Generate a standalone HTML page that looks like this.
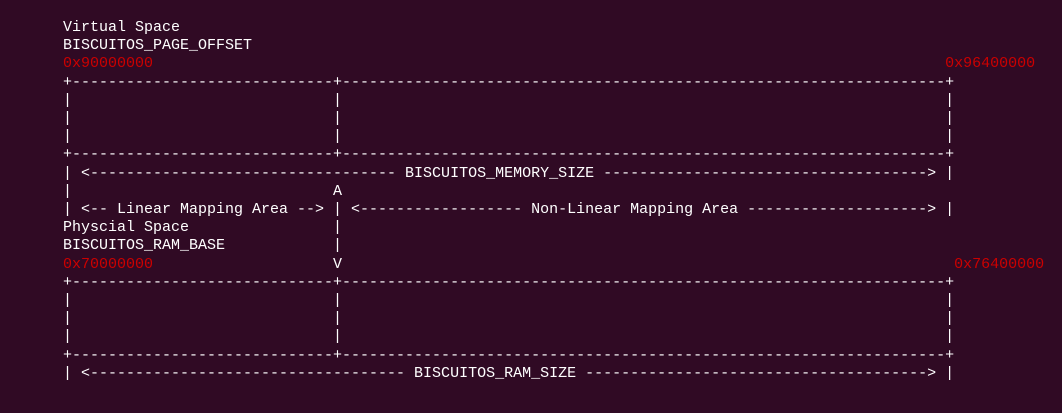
<!DOCTYPE html>
<html><head><meta charset="utf-8"><style>
html,body{margin:0;padding:0;background:#300a24;width:1062px;height:413px;overflow:hidden}
pre{position:absolute;left:63px;top:19px;margin:0;font-family:"Liberation Mono",monospace;font-size:15px;line-height:18.2px;color:#ffffff;letter-spacing:0}
.r{color:#cc0000}
</style></head><body><pre>Virtual Space
BISCUITOS_PAGE_OFFSET
<span class="r">0x90000000</span>                                                                                        <span class="r">0x96400000</span>
+-----------------------------+-------------------------------------------------------------------+
|                             |                                                                   |
|                             |                                                                   |
|                             |                                                                   |
+-----------------------------+-------------------------------------------------------------------+
| &lt;---------------------------------- BISCUITOS_MEMORY_SIZE ------------------------------------&gt; |
|                             A
| &lt;-- Linear Mapping Area --&gt; | &lt;------------------ Non-Linear Mapping Area --------------------&gt; |
Physcial Space                |
BISCUITOS_RAM_BASE            |
<span class="r">0x70000000</span>                    V                                                                    <span class="r">0x76400000</span>
+-----------------------------+-------------------------------------------------------------------+
|                             |                                                                   |
|                             |                                                                   |
|                             |                                                                   |
+-----------------------------+-------------------------------------------------------------------+
| &lt;----------------------------------- BISCUITOS_RAM_SIZE --------------------------------------&gt; |
</pre></body></html>
